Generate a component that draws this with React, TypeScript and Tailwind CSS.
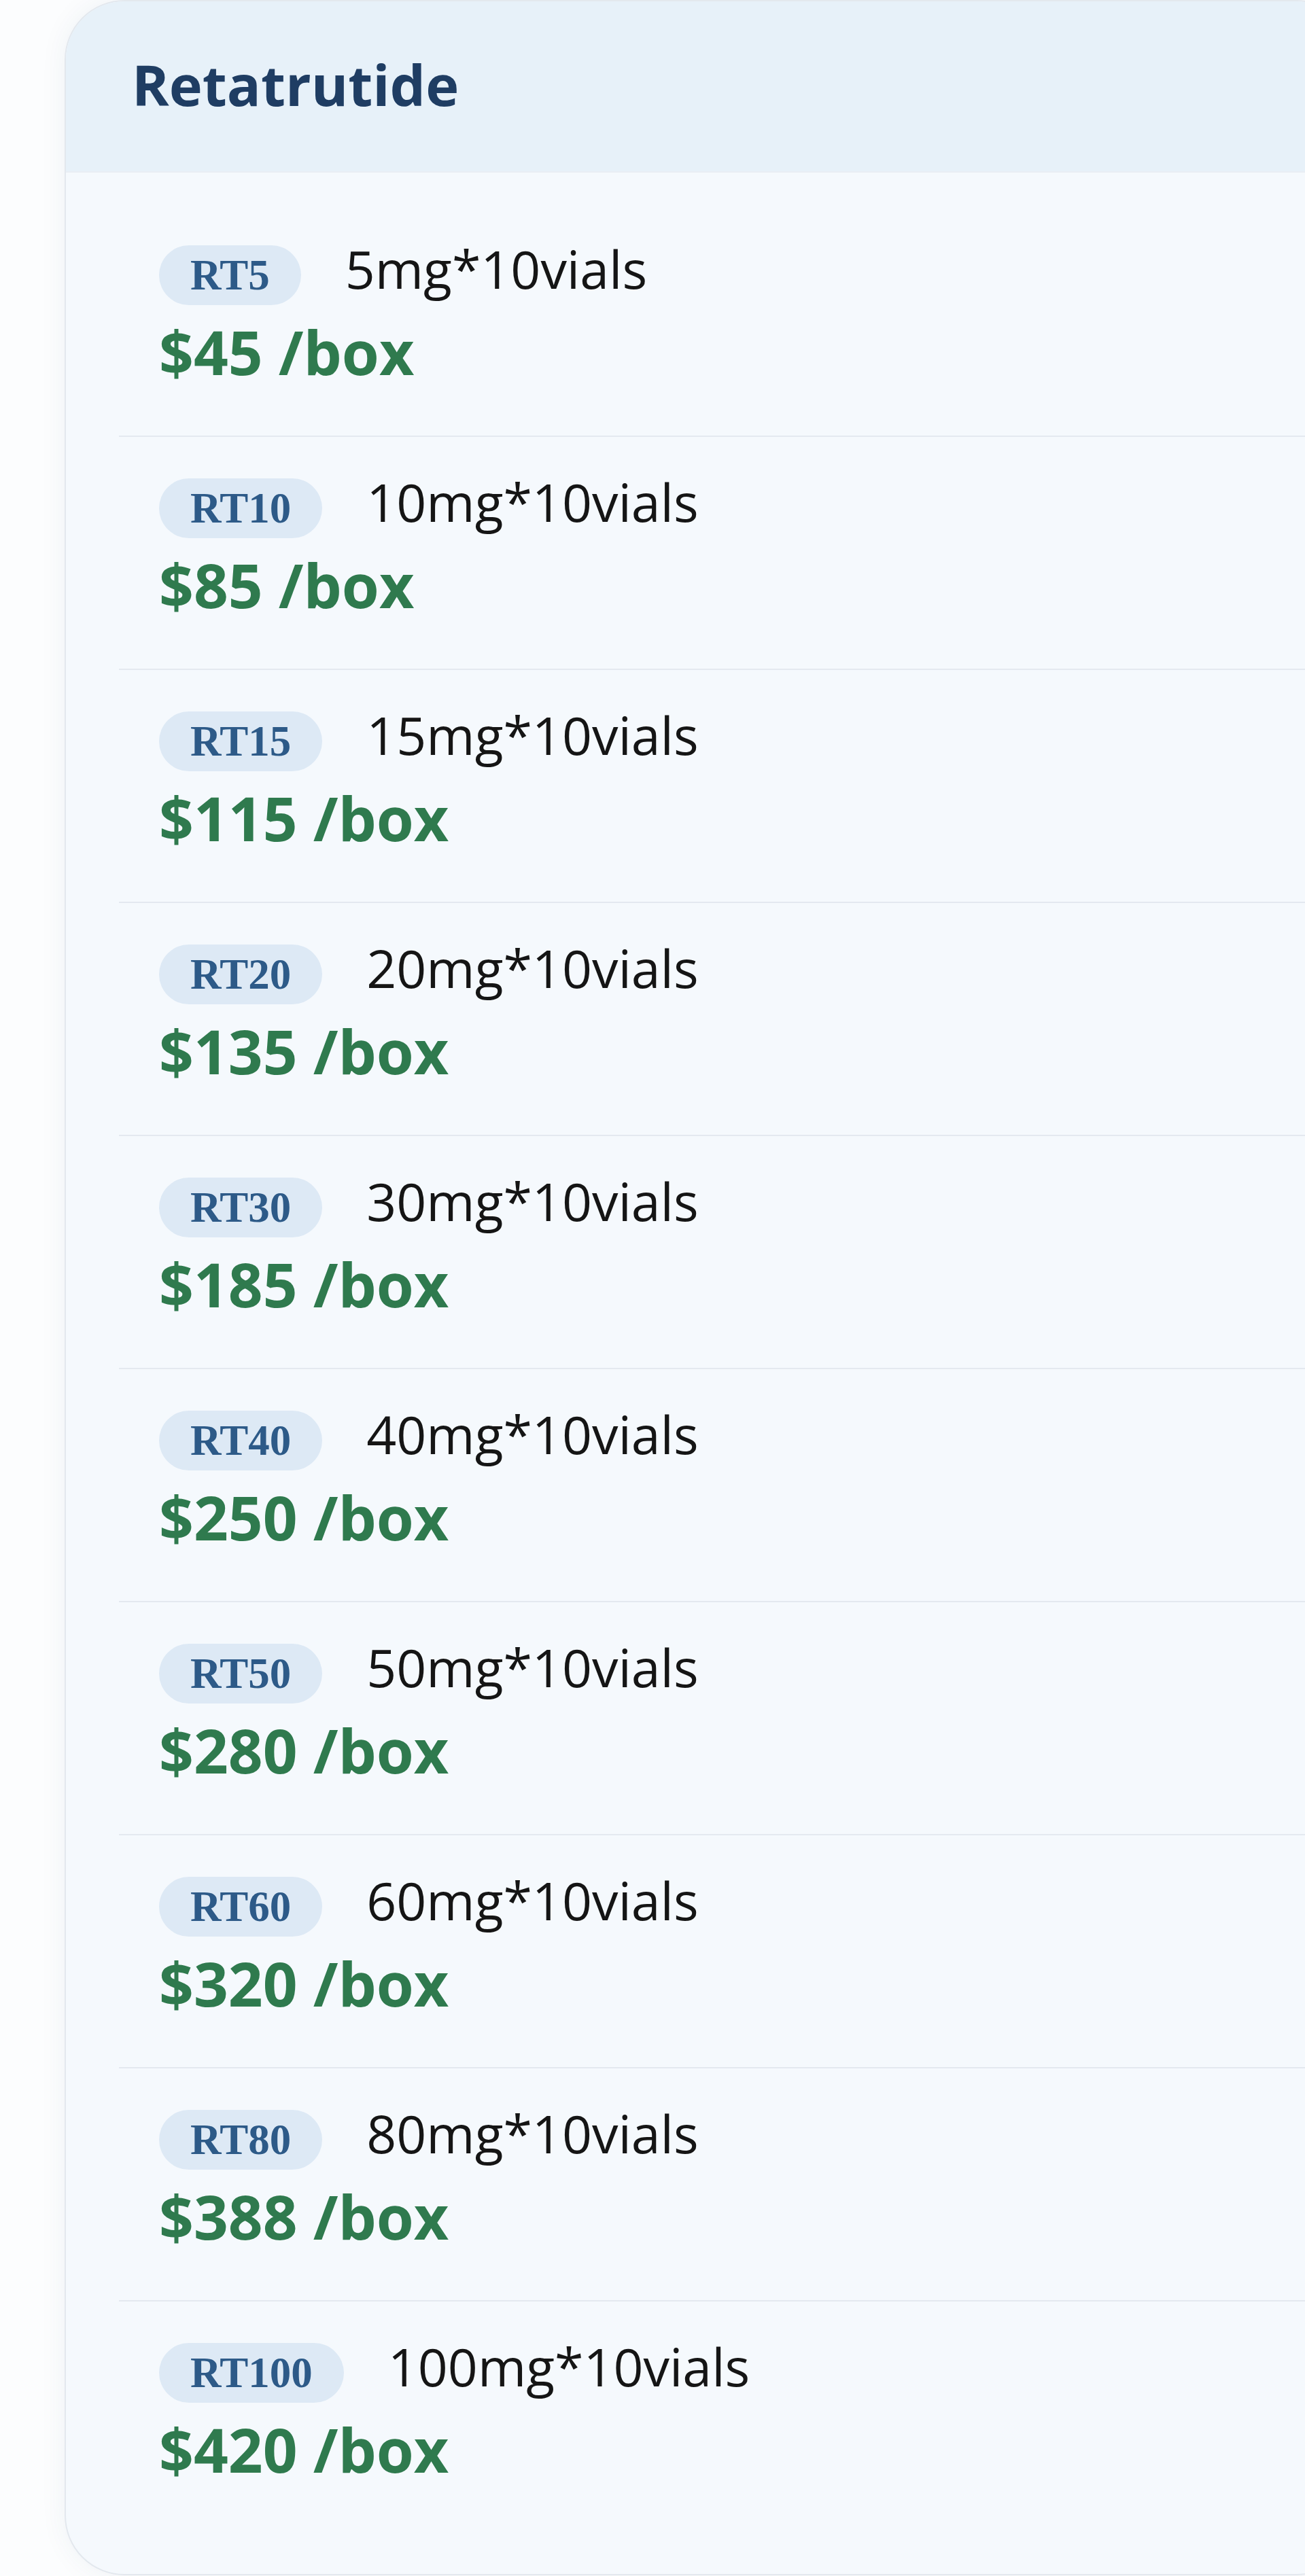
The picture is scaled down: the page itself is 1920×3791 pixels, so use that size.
import React from "react";

const rows = [
  { code: "RT5", desc: "5mg*10vials", price: "$45 /box" },
  { code: "RT10", desc: "10mg*10vials", price: "$85 /box" },
  { code: "RT15", desc: "15mg*10vials", price: "$115 /box" },
  { code: "RT20", desc: "20mg*10vials", price: "$135 /box" },
  { code: "RT30", desc: "30mg*10vials", price: "$185 /box" },
  { code: "RT40", desc: "40mg*10vials", price: "$250 /box" },
  { code: "RT50", desc: "50mg*10vials", price: "$280 /box" },
  { code: "RT60", desc: "60mg*10vials", price: "$320 /box" },
  { code: "RT80", desc: "80mg*10vials", price: "$388 /box" },
  { code: "RT100", desc: "100mg*10vials", price: "$420 /box" },
];

export default function App() {
  return (
    <div className="w-[1920px] h-[3791px] overflow-hidden bg-[#fcfdfe] font-['Open_Sans',sans-serif]">
      <div className="ml-[95px] w-[1900px] rounded-[88px] border-2 border-[#e3e8ee] bg-[#f5f9fd] overflow-hidden shadow-[0_0_40px_rgba(30,60,100,0.06)]">
        <div className="bg-[#e7f1f9] pl-[97px] pt-[71px] pb-[77px] border-b-2 border-[#e9eef4]">
          <h2 className="text-[83px] leading-[102px] font-bold text-[#1f3d63]">Retatrutide</h2>
        </div>
        <div className="pl-[78px] pt-[46px] pb-[60px]">
          {rows.map((r, i) => (
            <div
              key={r.code}
              className={
                i < rows.length - 1
                  ? "pl-[59px] pt-[61px] pb-[68px] border-b-2 border-[#e4e9f0]"
                  : "pl-[59px] pt-[61px] pb-[68px]"
              }
            >
              <div className="flex items-center gap-[65px] h-[88px]">
                <span className="h-[88px] flex items-center px-[46px] rounded-full bg-[#dde9f5] text-[#2d5a88] font-['Liberation_Serif',serif] font-bold text-[63px] leading-none">
                  {r.code}
                </span>
                <span className="-translate-y-[10px] text-[77px] leading-none text-[#151515]">{r.desc}</span>
              </div>
              <div className="mt-[14px] text-[89px] leading-[110px] font-bold text-[#2f7a4e]">{r.price}</div>
            </div>
          ))}
        </div>
      </div>
    </div>
  );
}
